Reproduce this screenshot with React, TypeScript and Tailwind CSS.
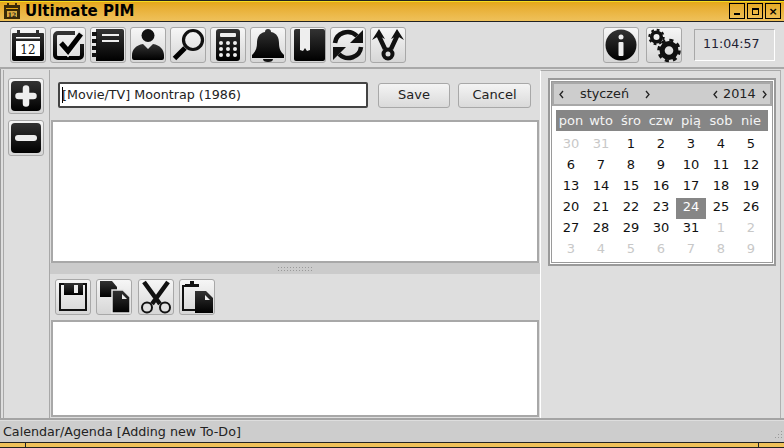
import type { ReactNode } from "react";

const week = ["pon", "wto", "śro", "czw", "pią", "sob", "nie"];
const days = [
  30, 31, 1, 2, 3, 4, 5, 6, 7, 8, 9, 10, 11, 12, 13, 14, 15, 16, 17, 18, 19, 20, 21, 22, 23, 24, 25, 26, 27, 28, 29, 30,
  31, 1, 2, 3, 4, 5, 6, 7, 8, 9,
];

const ToolButton = ({ children }: { children: ReactNode }) => (
  <button className="flex h-[36px] w-[36px] shrink-0 items-center justify-center rounded-[3px] border border-[#a8a8a8] bg-gradient-to-b from-[#f6f6f6] to-[#d6d6d6]">
    <svg viewBox="0 0 36 36" width={36} height={36} className="-m-px block shrink-0">
      {children}
    </svg>
  </button>
);

const Chevron = ({ left }: { left?: boolean }) => (
  <svg viewBox="0 0 5 9" width={5} height={9} className="shrink-0">
    <path fill="none" stroke="#222" strokeWidth="1.3" d={left ? "M4 1L1 4.5 4 8" : "M1 1l3 3.5L1 8"} />
  </svg>
);

const F = "url(#blk)";

const icons: ReactNode[] = [
  <>
    <path fill={F} d="M3 6h4V3h3v3h16V3h3v3h4a1 1 0 0 1 1 1v25a2 2 0 0 1-2 2H4a2 2 0 0 1-2-2V7a1 1 0 0 1 1-1z" />
    <rect x="6" y="10" width="24" height="1.5" fill="#fff" />
    <rect x="6" y="14" width="24" height="15" fill="#fff" />
    <text x="18" y="27" textAnchor="middle" fontFamily="'DejaVu Serif', serif" fontSize="12" fill="#111">12</text>
  </>,
  <>
    <path fill="none" stroke={F} strokeWidth="4" strokeLinejoin="round" d="M25 6H8a3 3 0 0 0-3 3v19a3 3 0 0 0 3 3h21a3 3 0 0 0 3-3V17" />
    <path fill="none" stroke="#e8e8e8" strokeWidth="8" d="M11 15l7 9L32 6" />
    <path fill="none" stroke="#000" strokeWidth="5" d="M11 16l7 8L31 7" />
  </>,
  <>
    <path fill={F} d="M6 2h26a2 2 0 0 1 2 2v28a2 2 0 0 1-2 2H6V2z" />
    <g fill="#111">
      <rect x="2" y="5" width="5" height="4" />
      <rect x="2" y="12" width="5" height="4" />
      <rect x="2" y="19" width="5" height="4" />
      <rect x="2" y="26" width="5" height="4" />
    </g>
    <rect x="12" y="7" width="17" height="2" fill="#eee" />
    <rect x="12" y="13" width="17" height="2" fill="#eee" />
  </>,
  <>
    <circle cx="18" cy="8.5" r="6.5" fill="#111" />
    <path fill={F} d="M13 17l5 5 5-5c7 1 11 6 11 11v3a2 2 0 0 1-2 2H4a2 2 0 0 1-2-2v-3c0-5 4-10 11-11z" />
  </>,
  <>
    <circle cx="23" cy="13" r="9.5" fill="none" stroke="#111" strokeWidth="3.2" />
    <path stroke="#000" strokeWidth="5" d="M15 21L4.5 31.5" />
  </>,
  <>
    <rect x="6" y="2" width="24" height="32" rx="3" fill={F} />
    <rect x="10" y="6" width="16" height="4" rx="1" fill="#eee" />
    <g fill="#eee">
      {[14, 20, 26].flatMap((y) => [11, 18, 25].map((x) => <circle key={`${x}-${y}`} cx={x} cy={y + 2} r="2" />))}
    </g>
  </>,
  <>
    <path fill={F} d="M18 2a3 3 0 0 1 3 3c6 1 8 6 8 11 0 6 2 9 5 12v3H2v-3c3-3 5-6 5-12 0-5 2-10 8-11a3 3 0 0 1 3-3z" />
    <path fill="#111" d="M13 32h10a5 3 0 0 1-10 0z" />
  </>,
  <>
    <rect x="4" y="2" width="31" height="32" rx="2" fill={F} />
    <path fill="#eee" d="M10 2h10v21l-3 1-2-3-2 3-3-1z" />
  </>,
  <>
    <path fill="none" stroke="#111" strokeWidth="4.5" d="M5 16C6 6 19 1 27 9" />
    <path fill="#111" d="M33 3v13H20z" />
    <path fill="none" stroke="#111" strokeWidth="4.5" d="M31 20C30 30 17 35 9 27" />
    <path fill="#111" d="M3 33V20h13z" />
  </>,
  <>
    <path fill="none" stroke="#111" strokeWidth="4.5" d="M8 7l7 15M28 7l-7 15" />
    <path fill="#111" d="M2 13L9 2l6 10-6-3zM34 13L27 2l-6 10 6-3z" />
    <circle cx="18" cy="27" r="4.5" fill="none" stroke="#111" strokeWidth="4" />
  </>,
];

const Gear = ({ cx, cy, r }: { cx: number; cy: number; r: number }) => {
  const c = 2 * Math.PI * r * 0.9;
  return (
    <>
      <circle cx={cx} cy={cy} r={r * 0.6} fill="none" stroke="#111" strokeWidth={r * 0.45} />
      <circle cx={cx} cy={cy} r={r * 0.9} fill="none" stroke="#111" strokeWidth={r * 0.25} strokeDasharray={`${c / 16} ${c / 16}`} />
    </>
  );
};

export default function App() {
  return (
    <div
      className="flex h-[448px] w-[784px] flex-col overflow-hidden bg-[#dedede] text-[#111]"
      style={{ fontFamily: "'DejaVu Sans', sans-serif" }}
    >
      <svg width="0" height="0" className="absolute">
        <defs>
          <linearGradient id="blk" x1="0" y1="0" x2="0" y2="1">
            <stop offset="0" stopColor="#333" />
            <stop offset="1" stopColor="#000" />
          </linearGradient>
        </defs>
      </svg>

      {/* title bar */}
      <div className="flex h-[22px] shrink-0 items-center border-y border-[#222] bg-gradient-to-b from-[#e5a610] to-[#efc15a] pl-[3px] pr-[3px] shadow-[inset_0_1px_0_#f6dc20]">
        <svg viewBox="0 0 18 18" width={18} height={18} className="mr-[5px]">
          <path fill="#3a2a08" d="M1 3h3V1h2v2h6V1h2v2h3v14H1z" />
          <rect x="3" y="6" width="12" height="1" fill="#e5a610" />
          <rect x="4" y="9" width="10" height="6" fill="#d9a93c" />
          <text x="9" y="14.5" textAnchor="middle" fontSize="6" fontWeight="700" fontFamily="'DejaVu Serif', serif" fill="#222">12</text>
        </svg>
        <span className="-ml-px text-[15px] font-bold leading-none text-black">Ultimate PIM</span>
        <div className="ml-auto flex gap-[2px]">
          <span className="flex h-[16px] w-[16px] items-end justify-center border border-black pb-[3px]">
            <span className="h-[2px] w-[6px] bg-black" />
          </span>
          <span className="flex h-[16px] w-[16px] items-center justify-center border border-black">
            <span className="h-[7px] w-[7px] border border-t-2 border-black" />
          </span>
          <span className="flex h-[16px] w-[16px] items-center justify-center border border-black text-[11px] font-bold leading-none text-black">
            ×
          </span>
        </div>
      </div>

      {/* main toolbar */}
      <div className="flex h-[47px] shrink-0 items-center border-b-2 border-[#a8a8a8] pl-[10px] pr-[9px]">
        <div className="flex gap-[4px]">
          {icons.map((icon, i) => (
            <ToolButton key={i}>{icon}</ToolButton>
          ))}
        </div>
        <div className="ml-auto flex items-center">
          <ToolButton>
            <circle cx="18" cy="18" r="15.5" fill={F} />
            <circle cx="18" cy="10" r="2.5" fill="#eee" />
            <rect x="15.5" y="15" width="5" height="14" rx="1" fill="#eee" />
          </ToolButton>
          <div className="ml-[7px]">
            <ToolButton>
              <Gear cx={10.5} cy={10} r={8} />
              <Gear cx={23} cy={23.5} r={11.5} />
            </ToolButton>
          </div>
          <div className="ml-[12px] flex h-[32px] w-[81px] items-center border border-b-white border-l-[#a8a8a8] border-r-white border-t-[#a8a8a8] pl-[8px] text-[12.6px] text-[#223]">
            11:04:57
          </div>
        </div>
      </div>

      {/* body */}
      <div className="flex min-h-0 flex-1 border-l border-[#9a9a9a] pl-[2px] pt-px">
        <div className="flex w-[47px] shrink-0 flex-col items-start gap-[6px] border-x border-[#a8a8a8] pl-[4px] pt-[8px]">
          <button className="flex h-[36px] w-[36px] items-center justify-center rounded-[3px] border border-[#a8a8a8] bg-gradient-to-b from-[#f6f6f6] to-[#d6d6d6]">
            <svg viewBox="0 0 32 32" width={32} height={32}>
              <rect x="1" y="1" width="30" height="30" rx="4" fill={F} />
              <path stroke="#eee" strokeWidth="6.5" strokeLinecap="round" d="M16 8.5v15M8.5 16h15" />
            </svg>
          </button>
          <button className="flex h-[36px] w-[36px] items-center justify-center rounded-[3px] border border-[#a8a8a8] bg-gradient-to-b from-[#f6f6f6] to-[#d6d6d6]">
            <svg viewBox="0 0 32 32" width={32} height={32}>
              <rect x="1" y="1" width="30" height="30" rx="4" fill={F} />
              <path stroke="#eee" strokeWidth="6" strokeLinecap="round" d="M8 16h16" />
            </svg>
          </button>
        </div>

        {/* editor */}
        <div className="flex w-[490px] shrink-0 flex-col">
          <div className="flex h-[50px] shrink-0 items-center gap-[10px] pl-[8px] pr-[7px]">
            <div className="flex h-[26px] w-[310px] items-center rounded-[2px] border-2 border-[#444] bg-white pl-[2px] text-[12.7px] text-[#222]">
              <span className="mr-[-1px] h-[16px] w-px bg-black" />
              [Movie/TV] Moontrap (1986)
            </div>
            <button className="h-[25px] w-[72px] rounded-[3px] border border-[#a8a8a8] bg-gradient-to-b from-[#f4f4f4] to-[#dadada] text-[13px] text-[#222]">
              Save
            </button>
            <button className="-ml-[2px] h-[25px] w-[73px] rounded-[3px] border border-[#a8a8a8] bg-gradient-to-b from-[#f4f4f4] to-[#dadada] text-[13px] text-[#222]">
              Cancel
            </button>
          </div>
          <div className="ml-[1px] mr-[1px] h-[143px] shrink-0 border-2 border-[#a8a8a8] bg-white" />
          <div className="flex h-[11px] shrink-0 items-center justify-center bg-[#cbcbcb]">
            <div className="h-[5px] w-[36px] bg-[radial-gradient(#999_0.7px,transparent_0.8px)] bg-[length:3px_3px]" />
          </div>
          <div className="flex h-[46px] shrink-0 items-center pl-[5px]">
            <div className="flex gap-[5px]">
              <ToolButton>
                <path fill="none" stroke="#111" strokeWidth="2" d="M5 5h26v26H5z" />
                <path fill={F} d="M9 4h19v12H9z" />
                <rect x="19" y="6" width="4" height="8" fill="#eee" />
              </ToolButton>
              <ToolButton>
                <path fill={F} d="M4 2h12l5 6v10H4z" />
                <path fill={F} stroke="#e6e6e6" strokeWidth="1.5" d="M16 11h11l7 7v16H16z" />
                <path fill="#eee" d="M26 15v5h5z" />
              </ToolButton>
              <div className="ml-px">
                <ToolButton>
                  <path stroke="#111" strokeWidth="4.5" d="M6 3l16 22M30 3L14 25" />
                  <circle cx="9" cy="28.5" r="5" fill="#e0e0e0" stroke="#111" strokeWidth="2" />
                  <circle cx="27" cy="28.5" r="5" fill="#e0e0e0" stroke="#111" strokeWidth="2" />
                </ToolButton>
              </div>
              <ToolButton>
                <path fill="none" stroke="#111" strokeWidth="2" d="M13 7H4v24h12" />
                <path fill="#111" d="M6 8V5h5V2h4v3h5v3z" />
                <path fill={F} d="M16 12h11l7 7v15H16z" />
                <path fill="#eee" d="M26 16v5h5z" />
              </ToolButton>
            </div>
          </div>
          <div className="ml-[1px] mr-[1px] h-[97px] shrink-0 border-2 border-[#a8a8a8] bg-white" />
        </div>

        {/* calendar side */}
        <div className="flex h-[349px] w-[241px] shrink-0 flex-col border border-b-[#9c9c9c] border-l-white border-r-[#b0b0b0] border-t-[#a8a8a8] pl-[7px] pt-[7px]">
          <div className="h-[188px] w-[228px] border-2 border-[#9a9a9a] bg-white p-px">
            <div className="h-full border border-[#9a9a9a]">
              <div className="flex h-[24px] items-center border-2 border-[#a8a8a8] bg-[#cdcdcd] pl-[5px] pr-[3px] text-[12.8px] text-[#222]">
                <Chevron left />
                <span className="ml-[16px] w-[49px] text-center">styczeń</span>
                <span className="ml-[16px] flex">
                  <Chevron />
                </span>
                <span className="ml-auto flex">
                  <Chevron left />
                </span>
                <span className="ml-[5px] w-[32px] text-center">2014</span>
                <span className="ml-[7px] flex">
                  <Chevron />
                </span>
              </div>
              <div className="px-[4px] pt-[4px]">
                <div className="grid h-[21px] grid-cols-[repeat(7,30px)] items-center bg-[#868686] text-center text-[13px] text-[#f4f4f4]">
                  {week.map((d) => (
                    <span key={d}>{d}</span>
                  ))}
                </div>
                <div className="mt-[4px] grid grid-cols-[repeat(7,30px)] auto-rows-[21px] text-center text-[13px] leading-[18px]">
                  {days.map((d, i) => {
                    const muted = i < 2 || i > 32;
                    const selected = i === 25;
                    return (
                      <span
                        key={i}
                        className={selected ? "bg-[#868686] text-white" : muted ? "text-[#c8c8c8]" : "text-[#111]"}
                      >
                        {d}
                      </span>
                    );
                  })}
                </div>
              </div>
            </div>
          </div>
        </div>
      </div>

      {/* status bar */}
      <div className="flex h-[24px] shrink-0 items-center border-t-2 border-[#a4a4a4] bg-[#cdcdcd] pl-[3px] pr-px pt-[2px] text-[12.7px] text-[#222] shadow-[inset_0_1px_0_#dedede]">
        Calendar/Agenda [Adding new To-Do]
        <svg viewBox="0 0 12 12" width={12} height={12} className="ml-auto self-end">
          <g fill="#999">
            <rect x="10" y="1" width="1" height="1" />
            <rect x="7" y="4" width="1" height="1" />
            <rect x="10" y="4" width="1" height="1" />
            <rect x="4" y="7" width="1" height="1" />
            <rect x="7" y="7" width="1" height="1" />
            <rect x="10" y="7" width="1" height="1" />
          </g>
        </svg>
      </div>

      {/* window bottom handle */}
      <div className="flex h-[6px] shrink-0 border-y border-[#222] bg-[#efc15a]">
        <div className="w-[26px] border-r border-[#222]" />
        <div className="flex-1" />
        <div className="w-[26px] border-l border-[#222]" />
      </div>
    </div>
  );
}
